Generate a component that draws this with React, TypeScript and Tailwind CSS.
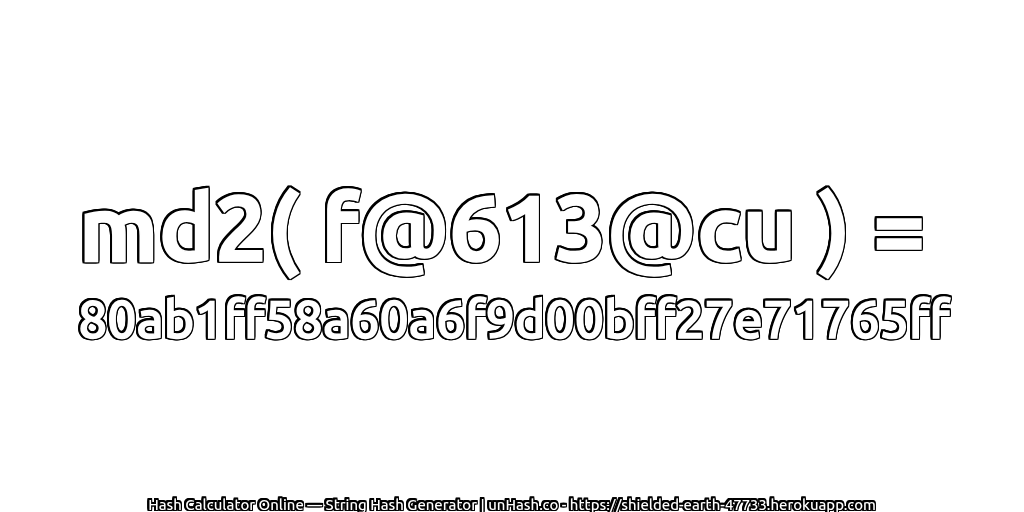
export default function App() {
  return (
    <div className="flex h-[512px] w-[1024px] flex-col items-center overflow-hidden bg-white font-['Ubuntu','Noto_Sans','DejaVu_Sans',sans-serif]">
      <div className="mt-[167px] mr-[20px] h-[120px] whitespace-nowrap text-[93px] leading-[120px] font-bold text-white [-webkit-text-stroke:1.5px_#fff] [filter:drop-shadow(1.75px_0_0_#000)_drop-shadow(-1.75px_0_0_#000)_drop-shadow(0_1.75px_0_#000)_drop-shadow(0_-1.75px_0_#000)]">md2( f@613@cu ) =</div>
      <div className="mt-[-3px] ml-[4px] h-[70px] whitespace-nowrap text-[51.8px] leading-[70px] font-medium text-white [-webkit-text-stroke:1.5px_#fff] [filter:drop-shadow(1.5px_0_0_#000)_drop-shadow(-1.5px_0_0_#000)_drop-shadow(0_1.5px_0_#000)_drop-shadow(0_-1.5px_0_#000)]">80ab1ff58a60a6f9d00bff27e71765ff</div>
      <div className="mt-auto mb-[-3px] whitespace-nowrap text-[14.9px] leading-[20px] font-medium text-white [filter:drop-shadow(1.5px_0_0_#000)_drop-shadow(-1.5px_0_0_#000)_drop-shadow(0_1.5px_0_#000)_drop-shadow(0_-1.5px_0_#000)]">Hash Calculator Online — String Hash Generator | unHash.co - https://shielded-earth-47733.herokuapp.com</div>
    </div>
  );
}
